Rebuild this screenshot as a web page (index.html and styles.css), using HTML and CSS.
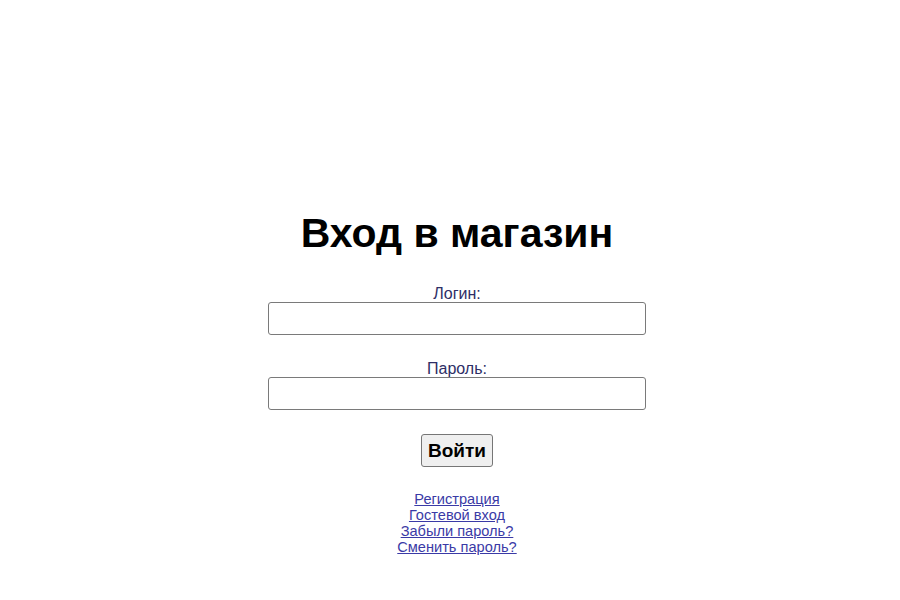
FILE: index.html
```html
<!DOCTYPE html>
<html lang="ru">
<head>
    <meta charset="UTF-8">
    <meta name="viewport" content="width=device-width, initial-scale=1.0">
    <title>Вход в магазин</title>
    <link rel="stylesheet" href="styles.css">
</head>
<body>
    <div class="login">
        <h1>Вход в магазин</h1>
        <form id="login-form">
            <label for="login">Логин:</label>
            <input type="text" id="login" name="login">
            <label for="password" class="second">Пароль:</label>
            <input type="password" id="password" name="password">
            <button type="submit">Войти</button>
        </form>
        <div class="links">
            <a href="#">Регистрация</a>
            <a href="#">Гостевой вход</a>
            <a href="#">Забыли пароль?</a>
            <a href="#">Сменить пароль?</a>
        </div>
    </div>
</body>
</html>
```

FILE: styles.css
```css
body {
    font-family: "Liberation Sans", Arial, sans-serif;
    background-color: #fff;
    margin: 0;
    padding: 0;
}
.login {
    display: flex;
    flex-direction: column;
    align-items: center;
    padding-top: 210px;
    padding-left: 14px;
}
h1 {
    margin: 0;
    font-size: 41px;
    line-height: 47px;
    font-weight: bold;
    color: #000;
}
form {
    display: flex;
    flex-direction: column;
    align-items: center;
    margin-top: 28px;
}
label {
    display: block;
    font-size: 16px;
    line-height: 17px;
    color: #2e2e66;
}
label.second {
    margin-top: 25px;
}
input[type="text"], input[type="password"] {
    width: 378px;
    height: 33px;
    box-sizing: border-box;
    border: 1px solid #7a7a7a;
    border-radius: 3px;
    padding: 2px 4px;
    font-size: 14px;
}
button[type="submit"] {
    margin-top: 24px;
    height: 33px;
    padding: 0 6px;
    font-family: "Liberation Sans", Arial, sans-serif;
    font-size: 19px;
    font-weight: bold;
    color: #000;
    background-color: #efefef;
    border: 1px solid #767676;
    border-radius: 3px;
    cursor: pointer;
}
.links {
    display: flex;
    flex-direction: column;
    align-items: center;
    margin-top: 24px;
}
.links a {
    font-size: 14.6px;
    line-height: 16px;
    color: #3a3aa6;
}
```
